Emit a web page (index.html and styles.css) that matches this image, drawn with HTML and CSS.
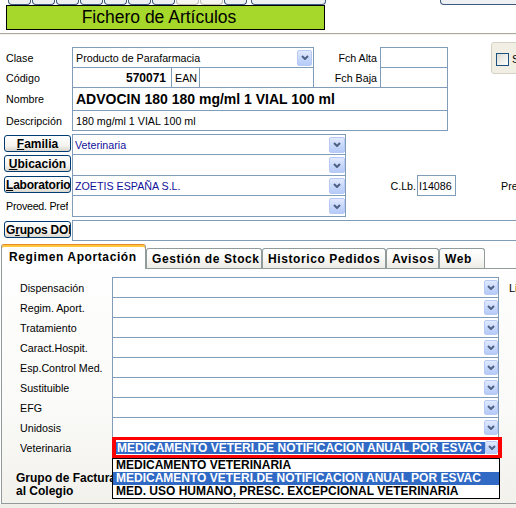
FILE: index.html
```html
<!DOCTYPE html>
<html lang="es">
<head>
<meta charset="utf-8">
<title>Fichero de Artículos</title>
<link rel="stylesheet" href="styles.css">
</head>
<body>
<div class="toolbar">
  <div class="tb"></div><div class="tb"></div><div class="tb"></div><div class="tb"></div><div class="tb"></div><div class="tb"></div><div class="tb"></div>
  <div class="tb light"></div><div class="tb light"></div><div class="tb"></div>
  <div class="tb wide"></div>
  <div class="tb right"></div>
</div>
<div class="title">Fichero de Artículos</div>
<div class="sep"></div>

<div class="upper">
  <div class="ufields">
    <div class="row urow">
      <div class="lbl">Clase</div>
      <div class="box combo w242"><span>Producto de Parafarmacia</span><div class="dd dd15"><svg width="8" height="5" viewBox="0 0 8 5"><path d="M1 1 L4 4 L7 1" fill="none" stroke="#4d6185" stroke-width="2"/></svg></div></div>
      <div class="rlbl">Fch Alta</div>
      <div class="box w68"></div>
    </div>
    <div class="row urow">
      <div class="lbl">Código</div>
      <div class="box w100 code">570071</div>
      <div class="box w29">EAN</div>
      <div class="box w115"></div>
      <div class="rlbl">Fch Baja</div>
      <div class="box w68"></div>
    </div>
    <div class="row urow tall">
      <div class="lbl">Nombre</div>
      <div class="box w376 nombre">ADVOCIN 180 180 mg/ml 1 VIAL 100 ml</div>
    </div>
    <div class="row urow">
      <div class="lbl">Descripción</div>
      <div class="box w376">180 mg/ml 1 VIAL 100 ml</div>
    </div>
  </div>
  <div class="optbox"><span class="chk"></span><span>S</span></div>
</div>

<div class="combos">
  <div class="row crow">
    <div class="bcol"><div class="xbtn"><u>F</u>amilia</div></div>
    <div class="box cfield blue"><span>Veterinaria</span><div class="dd dd16"><svg width="8" height="5" viewBox="0 0 8 5"><path d="M1 1 L4 4 L7 1" fill="none" stroke="#4d6185" stroke-width="2"/></svg></div></div>
  </div>
  <div class="row crow h22">
    <div class="bcol"><div class="xbtn"><u>U</u>bicación</div></div>
    <div class="box cfield"><span></span><div class="dd dd16"><svg width="8" height="5" viewBox="0 0 8 5"><path d="M1 1 L4 4 L7 1" fill="none" stroke="#4d6185" stroke-width="2"/></svg></div></div>
  </div>
  <div class="row crow">
    <div class="bcol"><div class="xbtn start tight"><u>L</u>aboratorio</div></div>
    <div class="box cfield blue"><span>ZOETIS ESPAÑA S.L.</span><div class="dd dd16"><svg width="8" height="5" viewBox="0 0 8 5"><path d="M1 1 L4 4 L7 1" fill="none" stroke="#4d6185" stroke-width="2"/></svg></div></div>
    <div class="clb">C.Lb.</div>
    <div class="box clbin">I14086</div>
    <div class="pre">Pre</div>
  </div>
  <div class="row crow h22">
    <div class="lbl2"><span>Proveed. Pref</span></div>
    <div class="box cfield"><span></span><div class="dd dd16"><svg width="8" height="5" viewBox="0 0 8 5"><path d="M1 1 L4 4 L7 1" fill="none" stroke="#4d6185" stroke-width="2"/></svg></div></div>
  </div>
</div>

<div class="row drow">
  <div class="bcol"><div class="xbtn start tight">G<u>r</u>upos DOE</div></div>
  <div class="box dfield"></div>
</div>

<div class="tabs">
  <div class="tab active">Regimen Aportación</div>
  <div class="tab t2">Gestión de Stock</div>
  <div class="tab t3">Historico Pedidos</div>
  <div class="tab t4">Avisos</div>
  <div class="tab t5">Web</div>
</div>

<div class="panel">
  <div class="row prow">
    <div class="plbl">Dispensación</div>
    <div class="box pfield"><span></span><div class="dd dd14"><svg width="8" height="5" viewBox="0 0 8 5"><path d="M1 1 L4 4 L7 1" fill="none" stroke="#4d6185" stroke-width="2"/></svg></div></div>
    <div class="li">Li</div>
  </div>
  <div class="row prow">
    <div class="plbl">Regim. Aport.</div>
    <div class="box pfield"><span></span><div class="dd dd14"><svg width="8" height="5" viewBox="0 0 8 5"><path d="M1 1 L4 4 L7 1" fill="none" stroke="#4d6185" stroke-width="2"/></svg></div></div>
  </div>
  <div class="row prow">
    <div class="plbl">Tratamiento</div>
    <div class="box pfield"><span></span><div class="dd dd14"><svg width="8" height="5" viewBox="0 0 8 5"><path d="M1 1 L4 4 L7 1" fill="none" stroke="#4d6185" stroke-width="2"/></svg></div></div>
  </div>
  <div class="row prow">
    <div class="plbl">Caract.Hospit.</div>
    <div class="box pfield"><span></span><div class="dd dd14"><svg width="8" height="5" viewBox="0 0 8 5"><path d="M1 1 L4 4 L7 1" fill="none" stroke="#4d6185" stroke-width="2"/></svg></div></div>
  </div>
  <div class="row prow">
    <div class="plbl">Esp.Control Med.</div>
    <div class="box pfield"><span></span><div class="dd dd14"><svg width="8" height="5" viewBox="0 0 8 5"><path d="M1 1 L4 4 L7 1" fill="none" stroke="#4d6185" stroke-width="2"/></svg></div></div>
  </div>
  <div class="row prow">
    <div class="plbl">Sustituible</div>
    <div class="box pfield"><span></span><div class="dd dd14"><svg width="8" height="5" viewBox="0 0 8 5"><path d="M1 1 L4 4 L7 1" fill="none" stroke="#4d6185" stroke-width="2"/></svg></div></div>
  </div>
  <div class="row prow">
    <div class="plbl">EFG</div>
    <div class="box pfield"><span></span><div class="dd dd14"><svg width="8" height="5" viewBox="0 0 8 5"><path d="M1 1 L4 4 L7 1" fill="none" stroke="#4d6185" stroke-width="2"/></svg></div></div>
  </div>
  <div class="row prow">
    <div class="plbl">Unidosis</div>
    <div class="box pfield"><span></span><div class="dd dd14"><svg width="8" height="5" viewBox="0 0 8 5"><path d="M1 1 L4 4 L7 1" fill="none" stroke="#4d6185" stroke-width="2"/></svg></div></div>
  </div>
  <div class="row prow">
    <div class="plbl">Veterinaria</div>
    <div class="redbox">
      <div class="sel">MEDICAMENTO VETERI.DE NOTIFICACION ANUAL POR ESVAC</div>
      <div class="dd dd13"><svg width="8" height="5" viewBox="0 0 8 5"><path d="M1 1 L4 4 L7 1" fill="none" stroke="#4d6185" stroke-width="2"/></svg></div>
    </div>
  </div>
  <div class="grupo">Grupo de Facturación<br>al Colegio</div>

  <div class="ddlist">
    <div class="item">MEDICAMENTO VETERINARIA</div>
    <div class="item hi">MEDICAMENTO VETERI.DE NOTIFICACION ANUAL POR ESVAC</div>
    <div class="item">MED. USO HUMANO, PRESC. EXCEPCIONAL VETERINARIA</div>
  </div>
</div>
<div class="footer"></div>
</body>
</html>
```

FILE: styles.css
```css
* { box-sizing: border-box; }
html, body { margin: 0; padding: 0; }
body {
  width: 516px;
  height: 508px;
  overflow: hidden;
  background: #fff;
  font-family: "Liberation Sans", Arial, sans-serif;
  font-size: 10.7px;
  color: #000;
}

.row { display: flex; }
.row > * { flex-shrink: 0; }

/* toolbar (only the bottoms are visible) */
.toolbar { display: flex; height: 5px; padding-left: 8px; width: 516px; }
.tb {
  flex-shrink: 0;
  width: 23px; height: 5px; margin-right: 1px;
  border: 1px solid #3c5a7e; border-top: none;
  border-radius: 0 0 4px 4px;
  background: #eef0f3;
}
.tb.light { border-color: #bdbab0; background: #f7f6f1; }
.tb.wide { width: 75px; margin-left: 3px; }
.tb.right { width: 80px; margin-left: auto; margin-right: -4px; }

.title {
  margin-left: 6px;
  width: 319px; height: 25px;
  background: #a6d82b;
  border: 1px solid #000;
  font-size: 17.5px;
  display: flex; align-items: center; justify-content: center;
  padding-right: 13px;
}
.sep {
  margin-top: 3px;
  height: 2px;
  border-top: 1px solid #aca899;
  border-bottom: 1px solid #f4f3ee;
}

/* upper block */
.upper { display: flex; align-items: flex-start; margin-top: 7px; }
.ufields { margin-top: 5px; width: 448px; flex-shrink: 0; }
.urow { height: 21px; margin-bottom: -1px; }
.urow.tall { height: 24px; }
.lbl {
  width: 72px; padding-left: 6px;
  display: flex; align-items: center;
  white-space: nowrap; overflow: hidden;
}
.rlbl {
  width: 66px; padding-right: 3px;
  display: flex; align-items: center; justify-content: flex-end;
  white-space: nowrap;
}
.box {
  border: 1px solid #7f9db9;
  background: #fff;
  display: flex; align-items: center;
  padding: 0 3px;
  white-space: nowrap; overflow: hidden;
}
.box + .box { margin-left: -1px; }
.combo { justify-content: space-between; padding-right: 1px; }
.w242 { width: 242px; }
.w68 { width: 68px; }
.w100 { width: 100px; }
.w29 { width: 29px; }
.w115 { width: 115px; }
.w376 { width: 376px; }
.code { justify-content: flex-end; font-weight: bold; font-size: 12px; padding-right: 5px; }
.nombre { font-weight: bold; font-size: 14px; }

.optbox {
  flex-shrink: 0;
  margin-left: 43px;
  width: 30px; height: 32px;
  border: 1px solid #d5d2c5; border-radius: 3px;
  background: #f1efe4;
  display: flex; align-items: flex-start; gap: 3px;
  padding: 10px 0 0 4px;
  font-size: 11px;
  line-height: 13px;
}
.chk {
  display: block;
  width: 13px; height: 13px;
  border: 1px solid #1c5180;
  background: linear-gradient(135deg, #dcdcd5, #ffffff);
}

/* dropdown buttons */
.dd {
  display: flex; align-items: center; justify-content: center;
  border: 1px solid #b7caf5;
  border-radius: 2px;
  background: linear-gradient(#e1e9fd, #c7d7fb 55%, #b6cbf8);
}
.dd15 { width: 15px; height: 16px; }
.dd16 { width: 16px; height: 16px; }
.dd14 { width: 14px; height: 15px; }
.dd13 { width: 13px; height: 13px; }

/* combos block */
.combos { margin-top: 4px; }
.crow { height: 21px; margin-bottom: -1px; }
.crow.h22 { height: 22px; }
.bcol { width: 72px; padding-left: 4px; padding-top: 1px; }
.xbtn {
  width: 67px; height: 17px;
  border: 1px solid #003c74;
  border-radius: 3px;
  background: linear-gradient(#ffffff, #f4f3ef 65%, #d9d6cc);
  font-weight: bold; font-size: 12px;
  display: flex; align-items: center; justify-content: center;
  white-space: nowrap; overflow: hidden;
}
.xbtn.start { justify-content: flex-start; padding-left: 1px; }
.xbtn.tight { letter-spacing: -0.2px; }
.cfield { width: 274px; justify-content: space-between; padding: 0 0 0 2px; }
.blue { color: #10109a; }
.clb {
  width: 71px; padding-right: 1px;
  display: flex; align-items: center; justify-content: flex-end;
}
.box.clbin { width: 39px; margin-left: 0; padding-left: 1px; }
.pre { margin-left: 45px; display: flex; align-items: center; }
.lbl2 {
  width: 72px; padding: 0 1px 0 6px;
  display: flex; align-items: center;
  white-space: nowrap; overflow: hidden;
  letter-spacing: -0.25px;
}
.lbl2 span { overflow: hidden; }

.drow { height: 21px; margin-top: 4px; }
.dfield { width: 450px; }

/* tabs */
.tabs { display: flex; align-items: flex-end; height: 27px; padding-left: 1px; }
.tab {
  flex-shrink: 0;
  height: 20px;
  border: 1px solid #919b9c; border-bottom: none;
  border-radius: 3px 3px 0 0;
  background: linear-gradient(#ffffff, #fafaf8 45%, #ecebe5);
  font-weight: bold; font-size: 12px; letter-spacing: 0.6px;
  display: flex; align-items: center;
  padding-left: 5px;
  white-space: nowrap; overflow: hidden;
}
.tab.active {
  position: relative; z-index: 1;
  width: 145px; height: 25px;
  margin-bottom: -1px;
  background: #fff;
  border-top: 1px solid #e68b2c;
  box-shadow: inset 0 2px 0 #ffc83c;
  padding-left: 7px;
}
.t2 { width: 116px; }
.t3 { width: 124px; }
.t4 { width: 53px; }
.t5 { width: 46px; }

/* panel */
.panel {
  position: relative;
  margin-left: 1px;
  width: 520px; height: 236px;
  border: 1px solid #919b9c;
  background: linear-gradient(#fefefe, #fafaf8 60%, #f2f1ec);
  padding-top: 8px;
}
.prow { height: 21px; margin-bottom: -1px; }
.plbl {
  width: 110px; padding-left: 18px;
  display: flex; align-items: center;
  white-space: nowrap;
}
.pfield { width: 387px; justify-content: space-between; padding: 0; }
.li { margin-left: 10px; display: flex; align-items: center; font-size: 11px; }
.redbox {
  width: 390px; height: 21px;
  border: solid #ff0000; border-width: 3px 4px;
  background: #fff;
  display: flex; align-items: center;
}
.sel {
  flex: 1; height: 12px;
  background: #316ac5; color: #fff;
  font-weight: bold; font-size: 12px; line-height: 12px;
  padding-left: 1px;
  white-space: nowrap; overflow: hidden;
}
.grupo {
  margin-top: 15px;
  padding-left: 14px;
  font-weight: bold; font-size: 12px; line-height: 13px;
}
.ddlist {
  position: absolute;
  top: 189px; left: 110px;
  width: 388px; height: 41px;
  border: 1px solid #000;
  background: #fff;
}
.item {
  height: 13px; line-height: 13px;
  padding-left: 3px;
  font-weight: bold; font-size: 12px;
  white-space: nowrap; overflow: hidden;
}
.item.hi { background: #316ac5; color: #fff; }

.footer { height: 8px; background: #efeee8; }
```
